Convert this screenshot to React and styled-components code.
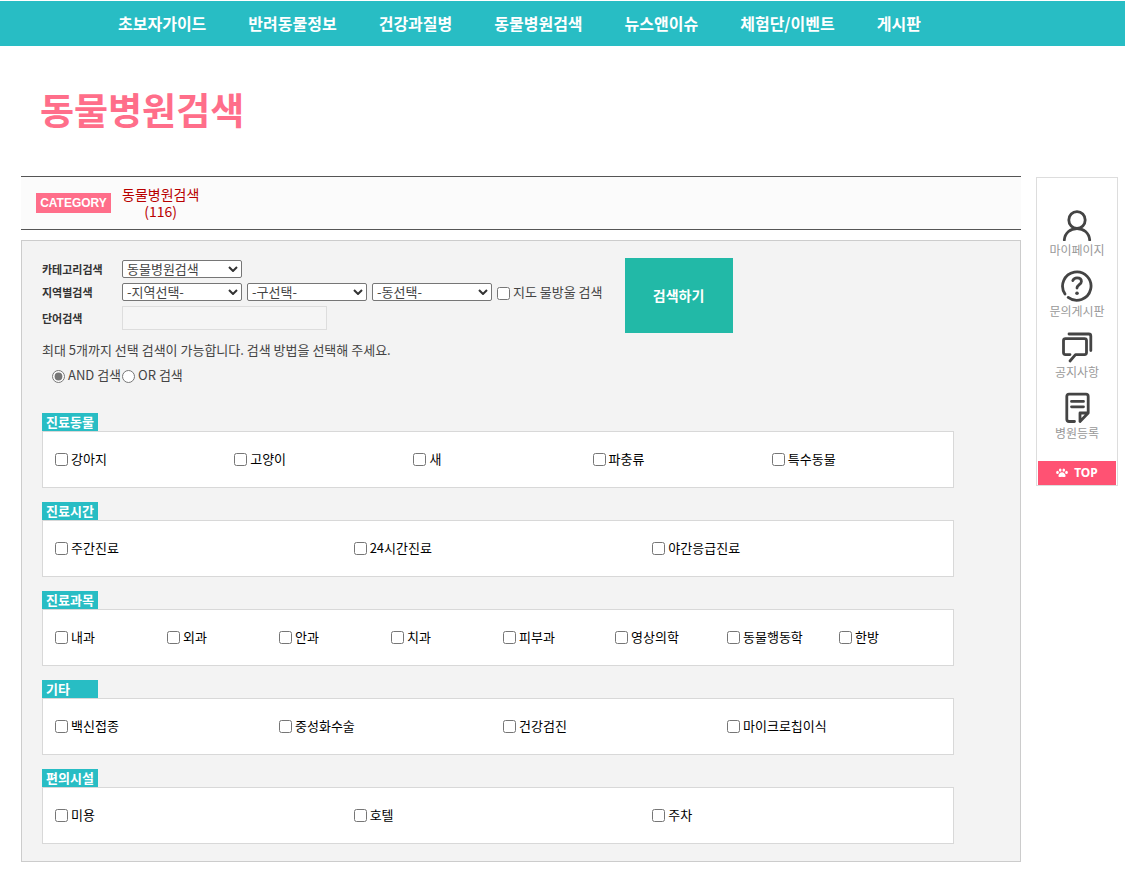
import React from 'react';
import styled, { createGlobalStyle } from 'styled-components';

const GlobalStyle = createGlobalStyle`
  * {
    box-sizing: border-box;
  }
  body {
    margin: 0;
    background: #fff;
    color: #444;
    font-family: "Noto Sans CJK KR", "Noto Sans", sans-serif;
    font-size: 13px;
    line-height: 18px;
  }
  a {
    color: inherit;
    text-decoration: none;
  }
  button, input, select {
    font-family: inherit;
  }
`;

const menus = ['초보자가이드', '반려동물정보', '건강과질병', '동물병원검색', '뉴스앤이슈', '체험단/이벤트', '게시판'];

const groups = [
  { name: '진료동물', options: ['강아지', '고양이', '새', '파충류', '특수동물'] },
  { name: '진료시간', options: ['주간진료', '24시간진료', '야간응급진료'] },
  { name: '진료과목', options: ['내과', '외과', '안과', '치과', '피부과', '영상의학', '동물행동학', '한방'] },
  { name: '기타', options: ['백신접종', '중성화수술', '건강검진', '마이크로칩이식'] },
  { name: '편의시설', options: ['미용', '호텔', '주차'] },
];

const UserIcon = () => (
  <Icon viewBox="0 0 32 32">
    <ellipse cx="16" cy="11" rx="8.2" ry="8.4" />
    <path d="M3.3 31C4 23.5 9.5 19.6 16 19.6S28 23.5 28.7 31" />
  </Icon>
);

const QuestionIcon = () => (
  <Icon viewBox="0 0 32 32">
    <path d="M4 24A14.2 14.2 0 1 1 7.2 27.4" />
    <path d="M11.8 10.6C12.6 8.6 14 7.8 16 7.8C18.6 7.8 20.4 9.2 20.4 11.4C20.4 14.4 16 14.8 16 18" />
    <path d="M16 23.2h.01" strokeWidth="3.6" />
  </Icon>
);

const ChatIcon = () => (
  <Icon viewBox="0 0 32 32">
    <path d="M9 30L14.5 23.6H23.5Q25.5 23.6 25.5 21.6V9.6Q25.5 7.6 23.5 7.6H4.5Q2.5 7.6 2.5 9.6V21.6Q2.5 23.6 4.5 23.6H9" />
    <path d="M8 3H27.8Q29.8 3 29.8 5V19.5" />
  </Icon>
);

const NoteIcon = () => (
  <Icon viewBox="0 0 32 32">
    <path d="M13.5 29.5H8Q5.8 29.5 5.8 27.3V4.4Q5.8 2.2 8 2.2H25Q27.2 2.2 27.2 4.4V21L19 29.5V21H27" />
    <path d="M10.5 9.4H22.5M10.5 14.8H22.5" />
  </Icon>
);

const quickLinks = [
  { name: '마이페이지', icon: <UserIcon /> },
  { name: '문의게시판', icon: <QuestionIcon /> },
  { name: '공지사항', icon: <ChatIcon /> },
  { name: '병원등록', icon: <NoteIcon /> },
];

const DropDown = ({ option, ...props }) => (
  <SelectBox>
    <Select {...props}>
      <option>{option}</option>
    </Select>
    <Arrow viewBox="0 0 10 6">
      <path d="M1 1L5 5L9 1" />
    </Arrow>
  </SelectBox>
);

const SearchForm = () => {
  return (
    <form onSubmit={(e) => e.preventDefault()}>
      <SearchArea>
        <Fields>
          <FieldRow>
            <FieldLabel htmlFor="category">카테고리검색</FieldLabel>
            <DropDown id="category" option="동물병원검색" />
          </FieldRow>
          <FieldRow>
            <FieldLabel htmlFor="region">지역별검색</FieldLabel>
            <DropDown id="region" option="-지역선택-" />
            <DropDown aria-label="구선택" option="-구선택-" />
            <DropDown aria-label="동선택" option="-동선택-" />
            <CheckLabel>
              <input type="checkbox" />
              지도 물방울 검색
            </CheckLabel>
          </FieldRow>
          <FieldRow>
            <FieldLabel htmlFor="keyword">단어검색</FieldLabel>
            <TextInput id="keyword" type="text" />
          </FieldRow>
        </Fields>
        <SearchButton type="submit">검색하기</SearchButton>
      </SearchArea>
      <Guide>최대 5개까지 선택 검색이 가능합니다. 검색 방법을 선택해 주세요.</Guide>
      <Modes>
        <CheckLabel>
          <input type="radio" name="mode" defaultChecked />
          AND 검색
        </CheckLabel>
        <CheckLabel>
          <input type="radio" name="mode" />
          OR 검색
        </CheckLabel>
      </Modes>
      {groups.map(({ name, options }) => (
        <Group key={name}>
          <GroupName>{name}</GroupName>
          <Options $columns={options.length}>
            {options.map((option) => (
              <CheckLabel key={option}>
                <input type="checkbox" />
                {option}
              </CheckLabel>
            ))}
          </Options>
        </Group>
      ))}
    </form>
  );
};

const App = () => {
  return (
    <>
      <GlobalStyle />
      <Nav>
        {menus.map((menu) => (
          <a href="#" key={menu}>{menu}</a>
        ))}
      </Nav>
      <Title>동물병원검색</Title>
      <Content>
        <Main>
          <CategoryBar>
            <CategoryTag>CATEGORY</CategoryTag>
            <CategoryLink href="#">
              <span>동물병원검색</span>
              <span>(116)</span>
            </CategoryLink>
          </CategoryBar>
          <Panel>
            <SearchForm />
          </Panel>
        </Main>
        <Quick>
          <QuickList>
            {quickLinks.map(({ name, icon }) => (
              <QuickLink href="#" key={name}>
                {icon}
                {name}
              </QuickLink>
            ))}
          </QuickList>
          <TopLink href="#">
            <svg width="12" height="10" viewBox="0 0 12 10" fill="#fff">
              <ellipse cx="1.5" cy="4.4" rx="1.3" ry="1.6" />
              <ellipse cx="4.2" cy="2.1" rx="1.3" ry="1.7" />
              <ellipse cx="7.8" cy="2.1" rx="1.3" ry="1.7" />
              <ellipse cx="10.5" cy="4.4" rx="1.3" ry="1.6" />
              <path d="M6 4.3C7.8 4.3 9.6 6.5 9.6 8C9.6 9.4 7.6 9.2 6 8.8C4.4 9.2 2.4 9.4 2.4 8C2.4 6.5 4.2 4.3 6 4.3Z" />
            </svg>
            TOP
          </TopLink>
        </Quick>
      </Content>
    </>
  );
};

const Nav = styled.nav`
  display: flex;
  align-items: center;
  gap: 42px;
  height: 46px;
  padding: 0 0 2px 118px;
  border-top: 1px solid #fff;
  background: #28bdc4;
  color: #fff;
  font-size: 16px;
  font-weight: 700;
  white-space: nowrap;
`;

const Title = styled.h1`
  margin: 0;
  padding: 38px 40px 42px;
  color: #ff6e8a;
  font-size: 37px;
  font-weight: 700;
  line-height: 50px;
`;

const Content = styled.div`
  display: flex;
  align-items: flex-start;
  gap: 15px;
  padding: 0 7px 12px 21px;
`;

const Main = styled.main`
  flex: 1;
  min-width: 0;
`;

const CategoryBar = styled.div`
  display: flex;
  align-items: center;
  gap: 11px;
  height: 54px;
  padding: 0 15px;
  border-top: 1px solid #555;
  border-bottom: 1px solid #555;
  background: #fbfbfb;
`;

const CategoryTag = styled.strong`
  width: 75px;
  background: #ff6e8a;
  color: #fff;
  font-family: "Liberation Sans", Arial, sans-serif;
  font-size: 12px;
  line-height: 20px;
  text-align: center;
`;

const CategoryLink = styled.a`
  display: flex;
  flex-direction: column;
  align-items: center;
  color: #b80000;
  font-size: 14px;
  line-height: 17px;
`;

const Panel = styled.section`
  margin-top: 10px;
  padding: 17px 18px 17px 20px;
  border: 1px solid #ccc;
  background: #f3f3f3;
`;

const SearchArea = styled.div`
  display: flex;
  gap: 22px;
`;

const Fields = styled.div`
  display: flex;
  flex-direction: column;
  gap: 5px;
  padding-top: 2px;
`;

const FieldRow = styled.div`
  display: flex;
  align-items: center;
  gap: 5px;
`;

const FieldLabel = styled.label`
  width: 75px;
  color: #333;
  font-size: 11px;
  font-weight: 700;
`;

const SelectBox = styled.div`
  position: relative;
  width: 120px;
  height: 18px;
`;

const Select = styled.select`
  appearance: none;
  display: block;
  width: 100%;
  height: 18px;
  padding: 0 16px 0 4px;
  border: 1px solid #767676;
  border-radius: 2px;
  background: #fff;
  color: #444;
  font-size: 13px;
  line-height: 16px;
`;

const Arrow = styled.svg`
  position: absolute;
  top: 6px;
  right: 4px;
  width: 10px;
  height: 6px;
  fill: none;
  stroke: #333;
  stroke-width: 2;
  pointer-events: none;
`;

const TextInput = styled.input`
  width: 205px;
  height: 24px;
  border: 1px solid #ddd;
  background: #f5f5f5;
  font-size: 13px;
`;

const CheckLabel = styled.label`
  display: flex;
  align-items: center;
  gap: 3px;
  white-space: nowrap;

  input {
    flex: none;
    width: 13px;
    height: 13px;
    margin: 2px 0 0;
    accent-color: #767676;
  }
`;

const SearchButton = styled.button`
  width: 108px;
  height: 75px;
  padding: 0 0 2px;
  border: 0;
  background: #22b9a7;
  color: #fff;
  font-size: 14px;
  font-weight: 700;
`;

const Guide = styled.p`
  margin: 8px 0 7px;
`;

const Modes = styled.div`
  display: flex;
  gap: 1px;
  margin: 0 10px 29px;
`;

const Group = styled.fieldset`
  width: 95%;
  min-width: 0;
  margin: 0;
  padding: 0;
  border: 0;

  & + & {
    margin-top: 14px;
  }
`;

const GroupName = styled.legend`
  width: 56px;
  padding: 0 4px;
  background: #28bdc4;
  color: #fff;
  font-weight: 700;
  white-space: nowrap;
`;

const Options = styled.div`
  display: grid;
  grid-template-columns: repeat(${(props) => props.$columns}, 1fr);
  align-items: center;
  height: 57px;
  padding: 0 2px 2px 12px;
  border: 1px solid #d8d8d8;
  background: #fff;
  color: #000;
`;

const Quick = styled.aside`
  width: 82px;
  margin-top: 1px;
  border: 1px solid #ddd;
`;

const QuickList = styled.div`
  display: flex;
  flex-direction: column;
  gap: 12px;
  padding: 31px 0 20px;
`;

const QuickLink = styled.a`
  display: flex;
  flex-direction: column;
  align-items: center;
  gap: 1px;
  color: #999;
  font-size: 12px;
  line-height: 16px;
`;

const Icon = styled.svg`
  width: 32px;
  height: 32px;
  fill: none;
  stroke: #444;
  stroke-width: 2.8;
  stroke-linecap: round;
  stroke-linejoin: round;
`;

const TopLink = styled.a`
  display: flex;
  align-items: center;
  justify-content: center;
  gap: 6px;
  height: 24px;
  margin: 0 1px;
  background: #ff5273;
  color: #fff;
  font-family: "Noto Sans", sans-serif;
  font-size: 12px;
  font-weight: 700;
`;

export default App;
